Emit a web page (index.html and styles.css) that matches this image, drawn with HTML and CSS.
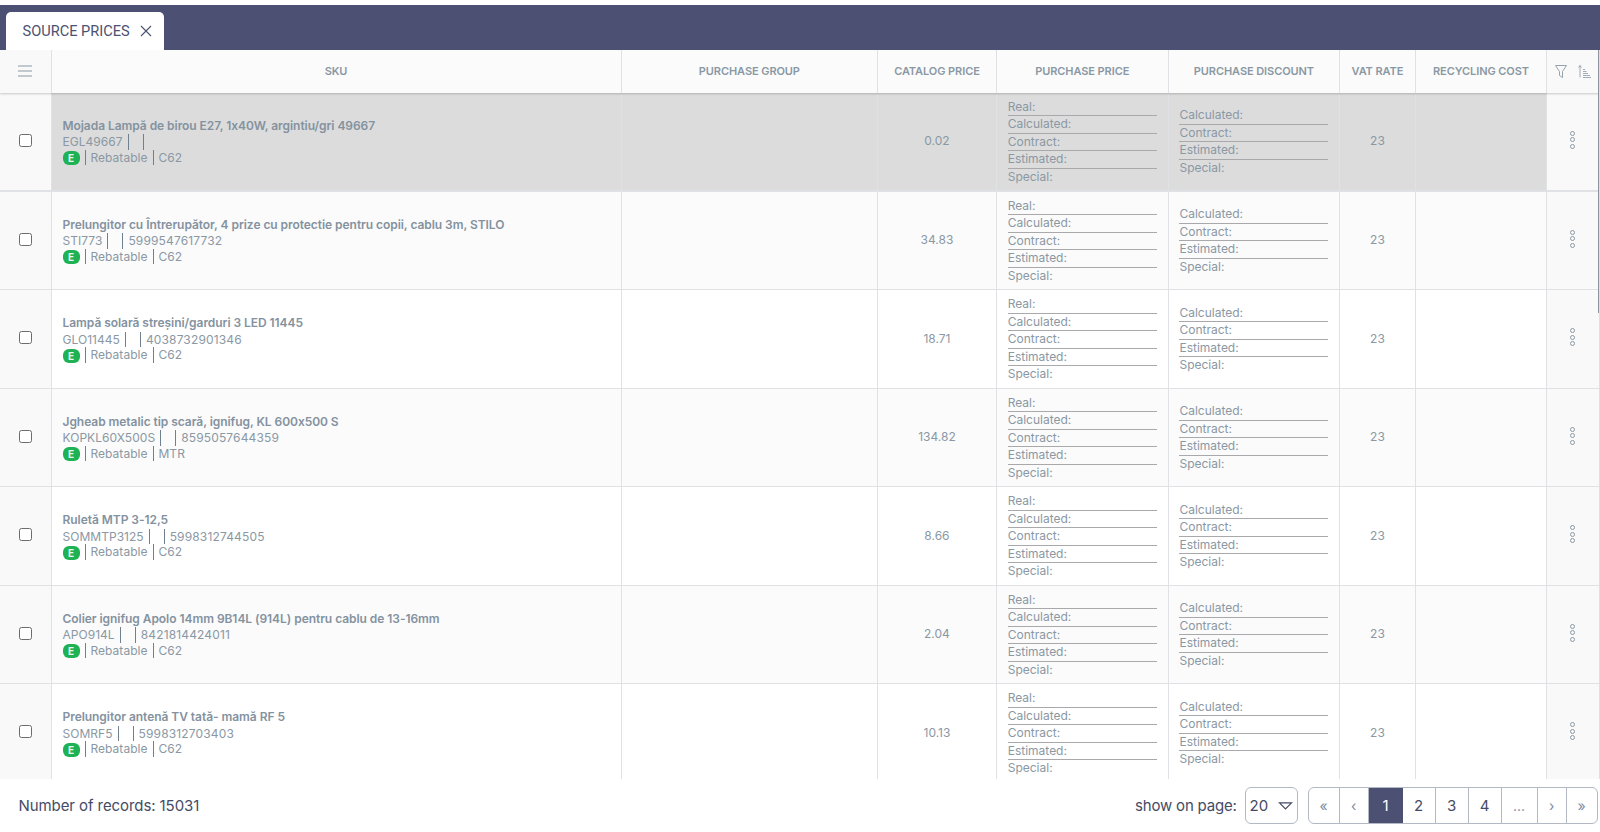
FILE: index.html
```html
<!DOCTYPE html>
<html lang="en">
<head>
<meta charset="utf-8">
<title>Source prices</title>
<link rel="stylesheet" href="styles.css">
</head>
<body>
<div class="app">
  <div class="tabbar">
    <div class="tab"><span>SOURCE PRICES</span>
      <svg class="tab-x" viewBox="0 0 12 12" width="12" height="12"><path d="M1 1l10 10M11 1L1 11"/></svg>
    </div>
  </div>
  <div class="grid">
    <div class="row head">
      <div class="cell c-side"><svg class="menu" viewBox="0 0 14 12" width="14" height="12"><path d="M0 1h14M0 6h14M0 11h14"/></svg></div>
      <div class="cell">SKU</div>
      <div class="cell">PURCHASE GROUP</div>
      <div class="cell">CATALOG PRICE</div>
      <div class="cell">PURCHASE PRICE</div>
      <div class="cell">PURCHASE DISCOUNT</div>
      <div class="cell">VAT RATE</div>
      <div class="cell">RECYCLING COST</div>
      <div class="cell c-side tools">
        <svg class="ico" viewBox="0 0 12 13" width="12" height="13"><path d="M.5.5h11L7.500 6.500v6l-3-2v-4z"/></svg>
        <svg class="ico sort" viewBox="0 0 13 13" width="13" height="13"><path d="M2 12.500V.5M.5 2.500 2 .5l1.500 2M5 12.500h8M5 10.500h7M5 8.500h5M5 6.500h3.500M5 4.500h2"/></svg>
      </div>
    </div>

    <div class="row selected">
      <div class="cell c-side"><span class="check"></span></div>
      <div class="cell sku"><div class="name">Mojada Lampă de birou E27, 1x40W, argintiu/gri 49667</div>
        <div class="line"><span class="part">EGL49667</span><span class="part empty"></span><span class="part"></span></div>
        <div class="line"><span class="part"><span class="badge">E</span></span><span class="part">Rebatable</span><span class="part">C62</span></div></div>
      <div class="cell"></div>
      <div class="cell num">0.02</div>
      <div class="cell"><div class="stack"><div>Real:</div><div>Calculated:</div><div>Contract:</div><div>Estimated:</div><div>Special:</div></div></div>
      <div class="cell"><div class="stack"><div>Calculated:</div><div>Contract:</div><div>Estimated:</div><div>Special:</div></div></div>
      <div class="cell num">23</div>
      <div class="cell"></div>
      <div class="cell c-side"><span class="dots"><i></i><i></i><i></i></span></div>
    </div>

    <div class="row">
      <div class="cell c-side"><span class="check"></span></div>
      <div class="cell sku"><div class="name">Prelungitor cu Întrerupător, 4 prize cu protectie pentru copii, cablu 3m, STILO</div>
        <div class="line"><span class="part">STI773</span><span class="part empty"></span><span class="part">5999547617732</span></div>
        <div class="line"><span class="part"><span class="badge">E</span></span><span class="part">Rebatable</span><span class="part">C62</span></div></div>
      <div class="cell"></div>
      <div class="cell num">34.83</div>
      <div class="cell"><div class="stack"><div>Real:</div><div>Calculated:</div><div>Contract:</div><div>Estimated:</div><div>Special:</div></div></div>
      <div class="cell"><div class="stack"><div>Calculated:</div><div>Contract:</div><div>Estimated:</div><div>Special:</div></div></div>
      <div class="cell num">23</div>
      <div class="cell"></div>
      <div class="cell c-side"><span class="dots"><i></i><i></i><i></i></span></div>
    </div>

    <div class="row">
      <div class="cell c-side"><span class="check"></span></div>
      <div class="cell sku"><div class="name">Lampă solară streșini/garduri 3 LED 11445</div>
        <div class="line"><span class="part">GLO11445</span><span class="part empty"></span><span class="part">4038732901346</span></div>
        <div class="line"><span class="part"><span class="badge">E</span></span><span class="part">Rebatable</span><span class="part">C62</span></div></div>
      <div class="cell"></div>
      <div class="cell num">18.71</div>
      <div class="cell"><div class="stack"><div>Real:</div><div>Calculated:</div><div>Contract:</div><div>Estimated:</div><div>Special:</div></div></div>
      <div class="cell"><div class="stack"><div>Calculated:</div><div>Contract:</div><div>Estimated:</div><div>Special:</div></div></div>
      <div class="cell num">23</div>
      <div class="cell"></div>
      <div class="cell c-side"><span class="dots"><i></i><i></i><i></i></span></div>
    </div>

    <div class="row">
      <div class="cell c-side"><span class="check"></span></div>
      <div class="cell sku"><div class="name">Jgheab metalic tip scară, ignifug, KL 600x500 S</div>
        <div class="line"><span class="part">KOPKL60X500S</span><span class="part empty"></span><span class="part">8595057644359</span></div>
        <div class="line"><span class="part"><span class="badge">E</span></span><span class="part">Rebatable</span><span class="part">MTR</span></div></div>
      <div class="cell"></div>
      <div class="cell num">134.82</div>
      <div class="cell"><div class="stack"><div>Real:</div><div>Calculated:</div><div>Contract:</div><div>Estimated:</div><div>Special:</div></div></div>
      <div class="cell"><div class="stack"><div>Calculated:</div><div>Contract:</div><div>Estimated:</div><div>Special:</div></div></div>
      <div class="cell num">23</div>
      <div class="cell"></div>
      <div class="cell c-side"><span class="dots"><i></i><i></i><i></i></span></div>
    </div>

    <div class="row">
      <div class="cell c-side"><span class="check"></span></div>
      <div class="cell sku"><div class="name">Ruletă MTP 3-12,5</div>
        <div class="line"><span class="part">SOMMTP3125</span><span class="part empty"></span><span class="part">5998312744505</span></div>
        <div class="line"><span class="part"><span class="badge">E</span></span><span class="part">Rebatable</span><span class="part">C62</span></div></div>
      <div class="cell"></div>
      <div class="cell num">8.66</div>
      <div class="cell"><div class="stack"><div>Real:</div><div>Calculated:</div><div>Contract:</div><div>Estimated:</div><div>Special:</div></div></div>
      <div class="cell"><div class="stack"><div>Calculated:</div><div>Contract:</div><div>Estimated:</div><div>Special:</div></div></div>
      <div class="cell num">23</div>
      <div class="cell"></div>
      <div class="cell c-side"><span class="dots"><i></i><i></i><i></i></span></div>
    </div>

    <div class="row">
      <div class="cell c-side"><span class="check"></span></div>
      <div class="cell sku"><div class="name">Colier ignifug Apolo 14mm 9B14L (914L) pentru cablu de 13-16mm</div>
        <div class="line"><span class="part">APO914L</span><span class="part empty"></span><span class="part">8421814424011</span></div>
        <div class="line"><span class="part"><span class="badge">E</span></span><span class="part">Rebatable</span><span class="part">C62</span></div></div>
      <div class="cell"></div>
      <div class="cell num">2.04</div>
      <div class="cell"><div class="stack"><div>Real:</div><div>Calculated:</div><div>Contract:</div><div>Estimated:</div><div>Special:</div></div></div>
      <div class="cell"><div class="stack"><div>Calculated:</div><div>Contract:</div><div>Estimated:</div><div>Special:</div></div></div>
      <div class="cell num">23</div>
      <div class="cell"></div>
      <div class="cell c-side"><span class="dots"><i></i><i></i><i></i></span></div>
    </div>

    <div class="row">
      <div class="cell c-side"><span class="check"></span></div>
      <div class="cell sku"><div class="name">Prelungitor antenă TV tată- mamă RF 5</div>
        <div class="line"><span class="part">SOMRF5</span><span class="part empty"></span><span class="part">5998312703403</span></div>
        <div class="line"><span class="part"><span class="badge">E</span></span><span class="part">Rebatable</span><span class="part">C62</span></div></div>
      <div class="cell"></div>
      <div class="cell num">10.13</div>
      <div class="cell"><div class="stack"><div>Real:</div><div>Calculated:</div><div>Contract:</div><div>Estimated:</div><div>Special:</div></div></div>
      <div class="cell"><div class="stack"><div>Calculated:</div><div>Contract:</div><div>Estimated:</div><div>Special:</div></div></div>
      <div class="cell num">23</div>
      <div class="cell"></div>
      <div class="cell c-side"><span class="dots"><i></i><i></i><i></i></span></div>
    </div>
    <div class="thumb"></div>
  </div>
  <div class="footer">
    <div class="records">Number of records: 15031</div>
    <div class="paging">
      <span class="show">show on page:</span>
      <div class="select"><span>20</span><svg viewBox="0 0 14 8" width="15" height="8"><path d="M1 .8h12L7 7z"/></svg></div>
      <div class="pager">
        <span class="pg muted w1">«</span><span class="pg muted w2">‹</span><span class="pg active">1</span><span class="pg">2</span><span class="pg">3</span><span class="pg">4</span><span class="pg muted w3">...</span><span class="pg muted w2">›</span><span class="pg muted w4">»</span>
      </div>
    </div>
  </div>
</div>
</body>
</html>
```
FILE: styles.css
```css
* { box-sizing: border-box; }
html, body { margin: 0; height: 100%; background: #fff; overflow: hidden; }
body { font-family: Inter, "Liberation Sans", sans-serif; font-feature-settings: "calt" 0; color: #8a98a4; }
.app { height: 832px; display: flex; flex-direction: column; padding-top: 5px; }
.tabbar { height: 45px; background: #4c5072; display: flex; align-items: flex-end; padding-left: 6px; flex: none; }
.tab { width: 158px; height: 38px; background: #fff; border-radius: 5px 5px 0 0; display: flex; align-items: center; gap: 10px; padding-left: 16.500px; font: 14.600px Roboto, sans-serif; color: #4b5170; }
.tab-x { fill: none; stroke: #4b5170; stroke-width: 1.1; }
.grid { height: 729px; overflow: hidden; flex: none; border-right: 1px solid #dcdfe3; position: relative; }
.thumb { position: absolute; top: 0; right: -1px; width: 2px; height: 263px; background: #8f94a0; }
.row { display: grid; grid-template-columns: 51.500px 570px 256.700px 118.500px 172px 171.500px 75.500px 131.500px 51.800px; height: 98.500px; border-bottom: 1px solid #dfe1e4; background: #fff; font-size: 12px; line-height: 15.500px; }
.row:nth-child(odd) { background: #fbfbfb; }
.row.head { height: 43px; background: #fbfbfb; box-shadow: 0 1px 2px rgba(0,0,0,.2); position: relative; border-bottom: 0; font-size: 11px; font-weight: 600; letter-spacing: -.08px; color: #8a98a4; }
.row.selected { background: #dcdcdc; border-bottom-width: 2px; }
.cell { display: flex; align-items: center; justify-content: center; border-right: 1px solid #dfe1e4; min-width: 0; }
.cell:last-child { border-right: 0; }
.c-side { background: #f9f9f9; }
.tools { gap: 11px; }
.menu { fill: none; stroke: #8a98a4; stroke-width: 1.2; margin-top: -2px; }
.ico { fill: none; stroke: #8a98a4; stroke-width: .9; }
.ico.sort { stroke-width: .8; }
.check { width: 13px; height: 13px; border: 1px solid #6b6b70; border-radius: 2.500px; background: #fff; margin: -2px 0 0 1px; }
.sku { flex-direction: column; align-items: flex-start; padding-left: 11px; padding-top: .5px; }
.name { font-weight: 600; letter-spacing: -.05px; margin-bottom: .8px; color: #84929f; }
.line { display: flex; align-items: stretch; letter-spacing: .03px; }
.line:nth-child(2) .part:last-child { letter-spacing: .15px; }
.part { padding-right: 5px; min-height: 15.500px; }
.part + .part { border-left: 1px solid #6f8091; padding-left: 5px; }
.part.empty { width: 15px; }
.badge { display: inline-block; width: 17px; height: 14px; line-height: 14px; border-radius: 6px; background: #1fb254; color: #e8f7ee; font-size: 10px; font-weight: 700; letter-spacing: 0; text-align: center; vertical-align: middle; }
.num { padding-bottom: 1px; }
.stack { width: 149px; margin-top: 2px; }
.stack div { height: 17.500px; line-height: 16px; border-bottom: 1px solid #a9a9ac; }
.stack div:last-child { border-bottom: 0; }
.dots { display: flex; flex-direction: column; gap: 1.700px; margin: -3px 0 0 -1px; }
.dots i { width: 5px; height: 5px; border: 1.400px solid #8a98a4; border-radius: 50%; }
.footer { flex: none; height: 53px; display: flex; justify-content: space-between; align-items: center; padding: 0 2.400px 0 18.500px; color: #454b66; font-size: 15px; }
.records { letter-spacing: -.08px; }
.paging { display: flex; align-items: center; }
.show { margin-right: 8px; letter-spacing: -.2px; }
.select { width: 53px; height: 36.500px; border: 1px solid #b3b8c2; border-radius: 6px; display: flex; align-items: center; justify-content: space-between; padding: 0 4px; font-size: 15px; margin-right: 10px; }
.select svg { fill: none; stroke: #454b66; stroke-width: 1.2; }
.pager { display: flex; height: 36.500px; border: 1px solid #b3b8c2; border-radius: 6px; overflow: hidden; }
.pg { width: 33px; display: flex; align-items: center; justify-content: center; border-right: 1px solid #b3b8c2; font-size: 15px; color: #454b66; }
.pg:last-child { border-right: 0; }
.pg.muted { color: #7c8aa0; font-size: 14px; }
.w1 { width: 31px; }
.w2 { width: 29px; }
.w3 { width: 36px; }
.w4 { width: 30px; }
.pg.active { background: #4c5072; color: #fff; width: 34px; border-right: 0; }
```
